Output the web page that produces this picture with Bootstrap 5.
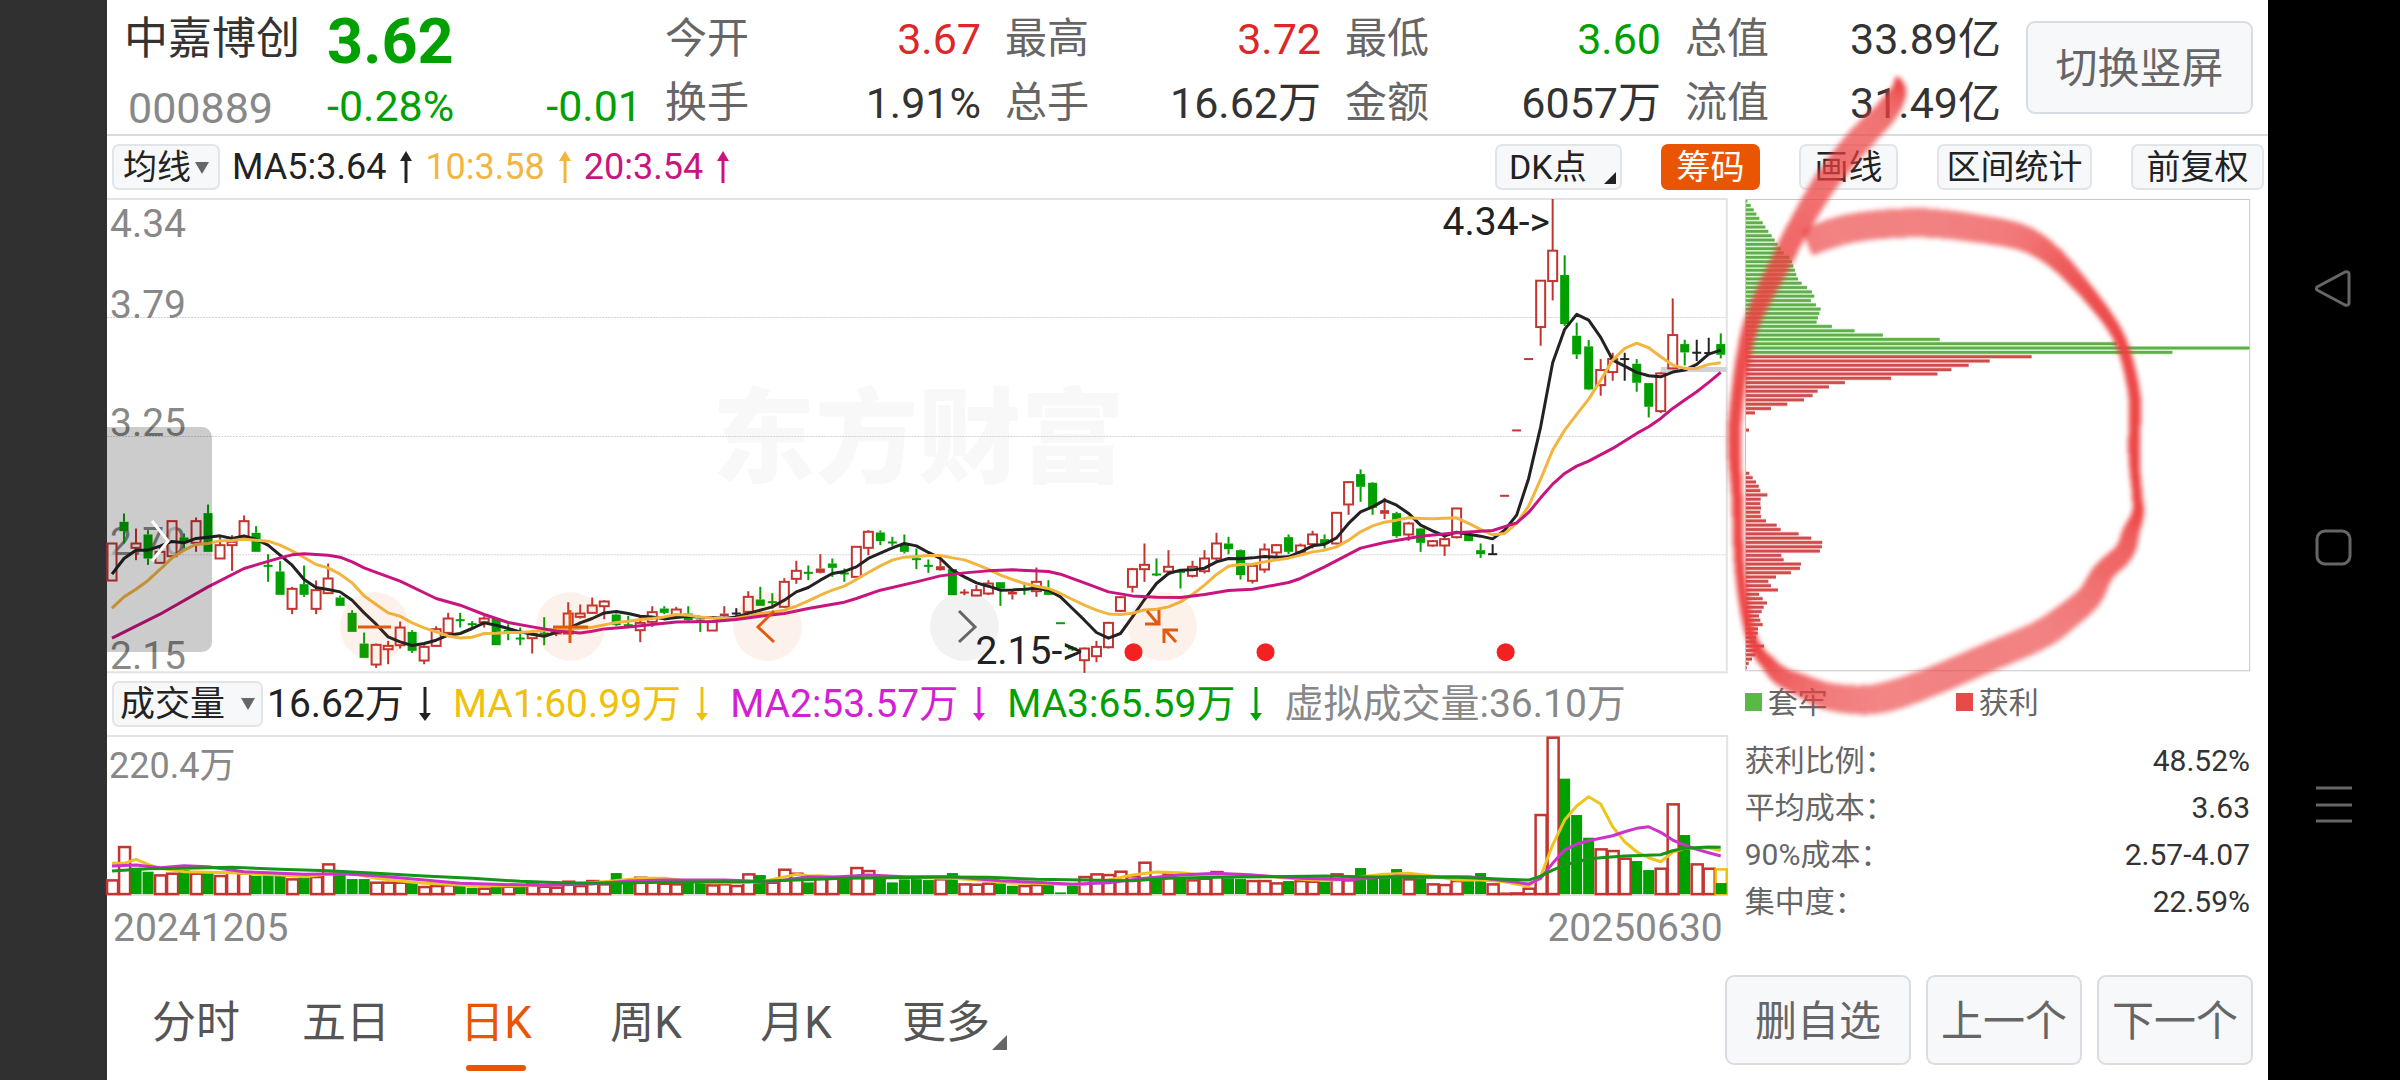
<!DOCTYPE html>
<html lang="zh-CN">
<head>
<meta charset="utf-8">
<meta name="viewport" content="width=device-width, initial-scale=1">
<title>中嘉博创 000889</title>
<link href="https://cdn.jsdelivr.net/npm/bootstrap@5.3.0/dist/css/bootstrap.min.css" rel="stylesheet">
<script src="https://cdn.jsdelivr.net/npm/bootstrap@5.3.0/dist/js/bootstrap.bundle.min.js"></script>
<style>
:root { --up:#dc2828; --down:#00a000; --brand:#ea5504; --ink:#333; --soft:#666; --pale:#888; --rule:#e3e3e3; --tile:#f7f8fa; }
body { font-family: Roboto, "Noto Sans CJK SC", sans-serif; color: var(--ink); background:#fff; overflow-x:hidden; }
.edge { flex: 0 0 107px; background:#303030; }
.sysnav { flex: 0 0 132px; background:#000; padding-top:14px; gap:198px; }
.sysnav button { width:60px; height:60px; background:none; border:0; padding:0; }
.quote-head { height:136px; border-bottom:2px solid #dcdcdc; padding: 7px 15px 5px 17px; }
.line64 { height:64px; line-height:64px; }
.stock-id { width:203px; }
.stock-name { font-size:44px; line-height:64px; margin:0; font-weight:400; }
.stock-code { font-size:43px; color:var(--pale); padding:5px 0 0 4px; }
.price-box { width:338px; padding-right:23px; }
.price-now { font-size:63px; font-weight:700; line-height:70px; height:64px; color:var(--down); }
.price-chg { font-size:43px; color:var(--down); padding-top:3px; }
.quotes { display:grid; grid-template-columns:repeat(4,minmax(0,1fr)); column-gap:24px; font-size:43px; margin:0 25px 0 0; }
.quotes dt { font-weight:400; color:var(--soft); font-size:42px; }
.quotes dd { margin:0; }
.c-up { color:var(--up); } .c-down { color:var(--down); }
.tile { background:var(--tile); border:2px solid #d9dde1; border-radius:9px; color:var(--soft); font-size:42px; line-height:1; padding:3px 0 0; font-weight:400; white-space:nowrap; }
.tile-sm { height:46px; border-radius:7px; font-size:34px; color:#222; border-color:#e2e5e8; position:relative; padding:0; }
.tile-on { background:var(--brand); border-color:var(--brand); color:#fff; }
.tools { height:62px; padding:0 4px 0 5px; }
.ma-line { font-size:36px; padding-left:12px; white-space:nowrap; }
.ma-line svg { width:39px; height:32px; }
.vol-line { font-size:39px; white-space:nowrap; }
.vol-line > svg { width:49px; height:34px; }
.board { display:grid; grid-template-columns:minmax(0,3fr) minmax(0,1fr); }
.board svg.plot { display:block; width:100%; height:auto; overflow:visible; }
.board text { font-family: Roboto, "Noto Sans CJK SC", sans-serif; }
.dates { height:64px; padding:0 5px 0 6px; font-size:39px; color:var(--pale); }
.round-btn { position:absolute; top:83%; width:69px; height:69px; border-radius:50%; border:0; padding:0; background:rgba(234,85,4,.08); }
.round-btn svg, .drawer svg { display:block; width:100%; height:100%; }
.drawer { position:absolute; left:0; top:229px; width:105px; height:225px; border:0; padding:0; border-radius:0 10px 10px 0; background:rgba(0,0,0,.2); }
.side { padding:0 18px 0 17px; }
.key { width:17px; height:18px; }
.legend-row { height:60px; font-size:30px; color:var(--soft); }
.legend-row > div { width:211px; gap:6px; }
.facts { font-size:30px; width:100%; margin-top:5px; }
.facts th { font-weight:400; color:var(--soft); }
.facts td { text-align:right; }
.facts th, .facts td { height:47px; line-height:47px; padding:0; }
.scribble { position:absolute; left:0; top:0; overflow:visible; pointer-events:none; }
.bottom { height:120px; padding:15px 15px 0 14px; }
.period { width:150px; height:105px; line-height:96px; font-size:44px; text-align:center; color:#555; text-decoration:none; position:relative; }
.period.on { color:var(--brand); }
.period.on::after { content:""; position:absolute; left:45px; top:90px; width:60px; height:6px; border-radius:3px; background:var(--brand); }
.period svg { position:absolute; right:14px; top:60px; }
.bottom .tile { height:90px; }
</style>
</head>
<body>
<div class="d-flex min-vh-100">
  <div class="edge"></div>
  <main class="flex-grow-1 position-relative" style="min-width:0">
    <header class="quote-head d-flex">
      <div class="stock-id flex-shrink-0">
        <h1 class="stock-name">中嘉博创</h1>
        <div class="stock-code line64">000889</div>
      </div>
      <div class="price-box flex-shrink-0">
        <div class="price-now">3.62</div>
        <div class="price-chg line64 d-flex justify-content-between"><span>-0.28%</span><span>-0.01</span></div>
      </div>
      <dl class="quotes flex-grow-1">
        <div class="line64 d-flex justify-content-between"><dt>今开</dt><dd class="c-up">3.67</dd></div>
        <div class="line64 d-flex justify-content-between"><dt>最高</dt><dd class="c-up">3.72</dd></div>
        <div class="line64 d-flex justify-content-between"><dt>最低</dt><dd class="c-down">3.60</dd></div>
        <div class="line64 d-flex justify-content-between"><dt>总值</dt><dd>33.89亿</dd></div>
        <div class="line64 d-flex justify-content-between"><dt>换手</dt><dd>1.91%</dd></div>
        <div class="line64 d-flex justify-content-between"><dt>总手</dt><dd>16.62万</dd></div>
        <div class="line64 d-flex justify-content-between"><dt>金额</dt><dd>6057万</dd></div>
        <div class="line64 d-flex justify-content-between"><dt>流值</dt><dd>31.49亿</dd></div>
      </dl>
      <button type="button" class="tile flex-shrink-0" style="width:227px;height:93px;margin-top:14px">切换竖屏</button>
    </header>

    <div class="tools d-flex align-items-center justify-content-between">
      <div class="d-flex align-items-center">
        <button type="button" class="tile tile-sm" style="width:108px">均线<svg width="14" height="14" viewBox="0 0 14 14" class="ms-1 mb-1"><path d="M0 1h14L7 13z" fill="#666"/></svg></button>
        <div class="ma-line d-flex align-items-center">
          <span style="color:#222">MA5:3.64</span><svg viewBox="0 0 39 32"><path d="M20 32V8" stroke="#222" stroke-width="3"/><path d="M20 0l6 10H14z" fill="#222"/></svg>
          <span style="color:#f2b640">10:3.58</span><svg viewBox="0 0 39 32"><path d="M20 32V8" stroke="#f2b640" stroke-width="3"/><path d="M20 0l6 10H14z" fill="#f2b640"/></svg>
          <span style="color:#c8147f">20:3.54</span><svg viewBox="0 0 39 32"><path d="M20 32V8" stroke="#c8147f" stroke-width="3"/><path d="M20 0l6 10H14z" fill="#c8147f"/></svg>
        </div>
      </div>
      <div class="d-flex" style="gap:39px">
        <button type="button" class="tile tile-sm text-start" style="width:127px;padding-left:12px">DK点<svg class="position-absolute bottom-0 end-0 me-1 mb-1" width="12" height="12"><path d="M12 0v12H0z" fill="#222"/></svg></button>
        <button type="button" class="tile tile-sm tile-on" style="width:99px">筹码</button>
        <button type="button" class="tile tile-sm" style="width:99px">画线</button>
        <button type="button" class="tile tile-sm" style="width:155px">区间统计</button>
        <button type="button" class="tile tile-sm" style="width:133px">前复权</button>
      </div>
    </div>

    <div class="board">
      <section>
        <div class="position-relative">
          <svg class="plot" id="kline" viewBox="0 0 1620 475"></svg>
          <button type="button" class="drawer" aria-label="展开"><svg viewBox="0 0 105 225"><path d="M45 94l16 20-16 20" fill="none" stroke="#fff" stroke-width="3"/></svg></button>
          <button type="button" class="round-btn" style="left:14.4%" aria-label="缩小"><svg viewBox="0 0 69 69"><path d="M18 35h33" stroke="#e05a10" stroke-width="3"/></svg></button>
          <button type="button" class="round-btn" style="left:26.5%" aria-label="放大"><svg viewBox="0 0 69 69"><path d="M17 35h35M34 18v33" stroke="#e05a10" stroke-width="3"/></svg></button>
          <button type="button" class="round-btn" style="left:38.6%" aria-label="向左"><svg viewBox="0 0 69 69"><path d="M41 19L25 35l16 15" fill="none" stroke="#e05a10" stroke-width="3"/></svg></button>
          <button type="button" class="round-btn" style="left:50.8%;background:rgba(0,0,0,.05)" aria-label="向右"><svg viewBox="0 0 69 69"><path d="M29 19l16 16-16 15" fill="none" stroke="#666" stroke-width="3"/></svg></button>
          <button type="button" class="round-btn" style="left:63%" aria-label="收起"><svg viewBox="0 0 69 69"><path d="M19 19l11 13M31 18v14H17M36 51V38h14M37 38l11 12" fill="none" stroke="#e05a10" stroke-width="3"/></svg></button>
        </div>
        <div class="tools d-flex align-items-center vol-line">
          <button type="button" class="tile tile-sm flex-shrink-0 me-1" style="width:151px;font-size:35px">成交量<svg width="14" height="12" viewBox="0 0 14 12" class="ms-3 mb-1"><path d="M0 0h14L7 12z" fill="#666"/></svg></button>
          <span style="color:#222">16.62万</span><svg viewBox="0 0 49 34"><path d="M21 0v26" stroke="#222" stroke-width="3"/><path d="M21 34l6-8H15z" fill="#222"/></svg>
          <span style="color:#f0c010">MA1:60.99万</span><svg viewBox="0 0 49 34"><path d="M21 0v26" stroke="#f0c010" stroke-width="3"/><path d="M21 34l6-8H15z" fill="#f0c010"/></svg>
          <span style="color:#d41fd4">MA2:53.57万</span><svg viewBox="0 0 49 34"><path d="M21 0v26" stroke="#d41fd4" stroke-width="3"/><path d="M21 34l6-8H15z" fill="#d41fd4"/></svg>
          <span style="color:#00a000">MA3:65.59万</span><svg viewBox="0 0 49 34"><path d="M21 0v26" stroke="#00a000" stroke-width="3"/><path d="M21 34l6-8H15z" fill="#00a000"/></svg>
          <span style="color:#888">虚拟成交量:36.10万</span>
        </div>
        <svg class="plot" id="volume" viewBox="0 0 1620 161"></svg>
        <div class="dates d-flex align-items-center justify-content-between"><span>20241205</span><span>20250630</span></div>
      </section>

      <aside class="side position-relative">
        <svg class="plot" id="chips" viewBox="0 0 506 475"></svg>
        <div class="legend-row d-flex align-items-center">
          <div class="d-flex align-items-center"><span class="key" style="background:#5ab946"></span>套牢</div>
          <div class="d-flex align-items-center"><span class="key" style="background:#e84a4a"></span>获利</div>
        </div>
        <table class="facts">
          <tbody>
            <tr><th scope="row">获利比例：</th><td>48.52%</td></tr>
            <tr><th scope="row">平均成本：</th><td>3.63</td></tr>
            <tr><th scope="row">90%成本：</th><td>2.57-4.07</td></tr>
            <tr><th scope="row">集中度：</th><td>22.59%</td></tr>
          </tbody>
        </table>
        <svg class="scribble" id="scribble" width="540" height="500"></svg>
      </aside>
    </div>

    <footer class="bottom d-flex justify-content-between">
      <nav class="d-flex">
        <a class="period" href="#">分时</a>
        <a class="period" href="#">五日</a>
        <a class="period on" href="#" aria-current="page">日K</a>
        <a class="period" href="#">周K</a>
        <a class="period" href="#">月K</a>
        <a class="period" href="#">更多<svg width="15" height="15"><path d="M15 0v15H0z" fill="#666"/></svg></a>
      </nav>
      <div class="d-flex" style="gap:15px">
        <button type="button" class="tile" style="width:186px">删自选</button>
        <button type="button" class="tile" style="width:156px">上一个</button>
        <button type="button" class="tile" style="width:156px">下一个</button>
      </div>
    </footer>
  </main>
  <nav class="sysnav d-flex flex-column align-items-center justify-content-center">
    <button type="button" aria-label="返回"><svg width="60" height="60" fill="none" stroke="#666" stroke-width="3" stroke-linejoin="round"><path d="M13 28Q12 30 13 31L41 46Q45 47 45 44V15Q45 12 41 13Z"/></svg></button>
    <button type="button" aria-label="主页"><svg width="60" height="60" fill="none" stroke="#666" stroke-width="3"><rect x="13" y="14" width="33" height="33" rx="8"/></svg></button>
    <button type="button" aria-label="最近任务"><svg width="60" height="60" stroke="#666" stroke-width="3"><path d="M12 13h36M12 30h36M12 46h36"/></svg></button>
  </nav>
</div>

<script>
const STEP = 12, X0 = 5;
const cx = i => X0 + STEP * i;

/* Candles: colour, body top, body bottom, high, low, in thirds of a pixel from the level v = 0. */
const candles = `r 430 541 430 541|g 365 393 340 430|r 430 443 385 480|g 403 475 390 494|r 455 488 440 490|r 363 468 363 468|g 412 428 400 445|r 363 428 352 455|g 339 455 313 455|r 435 475 410 475|r 425 435 405 512|r 363 410 346 415|g 398 455 378 455|g 497 497 462 545|g 514 584 483 584|r 566 626 560 642|g 552 584 496 590|r 570 626 541 642|r 535 579 490 579|g 592 617 586 617|g 638 695 630 695|g 730 773 697 773|r 734 793 730 803|r 737 747 722 792|r 682 735 664 745|g 695 752 690 758|r 740 781 735 792|r 687 737 678 740|r 655 698 638 700|g 660 660 638 682|g 672 672 663 682|r 655 666 648 682|g 655 735 655 735|g 692 692 672 720|g 715 715 682 735|r 702 714 690 760|g 700 700 651 735|r 690 700 680 708|r 640 700 606 700|r 640 650 613 655|r 616 638 592 640|r 604 618 600 657|g 643 675 640 678|g 675 675 647 680|r 668 690 650 726|r 636 665 618 680|g 625 638 618 642|r 628 650 620 655|g 640 660 618 665|g 658 667 655 695|r 664 691 664 691|R 640 648 618 650|k 640 640 624 650|r 590 635 573 640|g 598 617 560 617|g 606 606 579 625|r 545 620 534 622|r 512 536 482 551|g 518 518 496 540|R 505 518 462 520|g 490 503 475 530|g 520 520 505 545|r 440 530 440 530|r 395 443 390 465|g 397 423 391 435|g 427 427 410 437|g 432 455 403 460|g 477 477 445 507|g 497 497 478 518|R 498 510 475 512|g 507 585 507 585|R 577 577 567 585|r 570 586 555 588|r 550 580 540 585|g 546 565 546 617|R 575 583 570 598|g 568 568 552 584|r 545 573 502 590|g 566 584 540 585|g 669 669 669 669|g 745 745 738 752|r 745 780 742 818|r 740 768 722 786|r 668 741 665 745|r 591 632 588 635|r 507 560 503 577|r 494 507 430 545|g 523 523 475 528|r 500 514 450 525|g 515 515 515 565|r 500 527 482 532|r 475 513 450 520|r 430 475 398 482|g 430 447 410 462|g 450 525 448 538|r 497 542 490 550|r 448 508 430 518|r 435 457 432 470|g 411 455 403 462|r 436 455 430 460|r 403 432 392 445|g 417 430 403 445|r 338 430 336 432|r 246 313 243 344|g 222 260 208 305|g 248 323 246 344|R 330 341 293 357|g 339 408 335 413|r 370 403 365 422|g 385 428 383 455|r 423 436 420 440|r 417 436 410 467|r 325 411 323 415|g 402 423 402 423|g 450 462 430 473|k 462 462 432 462|R 287 287 287 287|R 91 91 91 91|R -123 -123 -123 -123|r -358 -219 -360 -163|r -448 -357 -603 -299|g -375 -228 -434 -222|g -193 -137 -232 -123|g -161 -32 -180 -30|r -90 -45 -123 -13|r -123 -84 -142 -58|k -123 -123 -142 -58|g -109 -52 -123 -25|g -51 20 -51 52|r -80 33 -84 39|r -195 -95 -305 -93|g -168 -143 -181 -104|k -142 -142 -181 -117|k -141 -141 -187 -138|g -168 -136 -200 -125`
  .split('|').map(s => { const [c, ...n] = s.split(' '); return [c, ...n.map(Number)]; });
const ky = v => v / 3 + 202;
const ink = { r: '#c23531', R: '#c23531', g: '#00a000', k: '#222' };

/* A list of values, or index:value pairs where steps are skipped. */
const pts = s => s.trim().split(/[ ,]+/).map((t, i) => t.includes(':') ? t.split(':').map(Number) : [i, +t]);
const poly = (s, y, color) => `<polyline fill="none" stroke="${color}" stroke-width="3" stroke-linejoin="round" points="${pts(s).map(([i, v]) => cx(i) + ',' + y(v).toFixed(1)).join(' ')}"/>`;

const ma5 = '522 475 450 450 438 424 428 415 411 407 415 407 418 435 465 495 538 562 568 575 600 638 672 710 725 736 730 720 705 700 685 668 675 685 695 702 708 697 685 668 655 638 634 640 648 650 656 652 648 651 652 655 650 640 630 620 600 575 562 540 520 514 500 475 459 443 430 437 457 475 510 530 548 558 570 569 567 564 570 590 625 660 697 714 700 650 598 550 520 510 509 504 485 475 476 473 469 471 470 455 437 432 413 370 335 320 300 315 340 375 392 407 396 402 408 416 390 345 235 80 -112 -212 -257 -240 -188 -120 -102 -83 -73 -70 -84 -90 -107 -138 -150';
const ma10 = '624 590 567 541 508 473 450 433 430 422 421 417 420 423 435 452 472 493 503 522 548 587 613 638 648 668 683 695 707 713 711 700 699 697 697 694 690 688 688 684 681 674 667 663 658 655 650 643 645 650 653 655 654 648 640 636 630 618 602 585 570 558 538 517 497 480 471 469 466 466 473 479 493 508 525 538 550 558 565 580 598 615 630 641 643 639 629 627 620 605 583 555 523 498 493 492 485 479 474 465 455 450 440 420 395 377 366 360 353 355 356 354 353 370 388 404 400 370 318 237 150 90 43 -3 -60 -120 -155 -171 -157 -130 -105 -95 -95 -107 -112';
const ma20 = '0:714 4:642 8:560 11:505 14:473 15:464 16:461 17:463 18:465 19:471 20:485 21:503 22:517 24:543 27:595 29:615 31:643 33:667 35:680 37:692 39:698 40:693 41:686 43:680 45:673 47:665 50:664 52:658 54:648 56:640 58:625 61:606 62:595 64:570 67:545 69:527 71:518 73:512 75:509 78:514 79:522 81:548 83:575 85:587 87:591 89:592 91:583 93:571 95:567 98:547 99:535 101:500 104:444 106:427 109:408 112:398 115:391 117:368 118:337 119:293 120:252 121:220 122:198 123:183 125:145 127:100 128:80 129:55 130:25 131:0 132:-25 133:-53 134:-83';

let out = '<text x="605" y="277" font-size="103" font-weight="900" fill="#f8f8f8">东方财富</text>';
out += '<path d="M0 1H1619V474H0" fill="none" stroke="#e3e3e3" stroke-width="2"/>';
for (const y of [119, 238, 356]) out += `<path d="M0 ${y}.5H1618" stroke="#d4d4d4" stroke-dasharray="2 1"/>`;
[['4.34', 39], ['3.79', 120], ['3.25', 238], ['2.70', 357], ['2.15', 471]].forEach(([t, y]) => out += `<text x="3" y="${y}" font-size="39" fill="#888">${t}</text>`);
out += '<path d="M1553 171.500h66" stroke="#d0d4d9" stroke-width="5"/>';
candles.forEach(([c, t, b, h, l], i) => {
  const x = cx(i), col = ink[c];
  if (h < t) out += `<path d="M${x} ${ky(h)}V${ky(t)}" stroke="${col}" stroke-width="2"/>`;
  if (l > b) out += `<path d="M${x} ${ky(b)}V${ky(l)}" stroke="${col}" stroke-width="2"/>`;
  if (b - t < 4) out += `<path d="M${x - 4.5} ${ky(t)}h9" stroke="${col}" stroke-width="2"/>`;
  else if (c === 'r') out += `<rect x="${x - 4.5}" y="${ky(t)}" width="9" height="${(b - t) / 3}" fill="#fff" fill-opacity=".6" stroke="${col}" stroke-width="2"/>`;
  else out += `<rect x="${x - 4.5}" y="${ky(t)}" width="9" height="${(b - t) / 3}" fill="${col}"/>`;
});
out += poly(ma5, ky, '#222') + poly(ma10, ky, '#f2b640') + poly(ma20, ky, '#c8147f');
out += '<text x="1335" y="37" font-size="39" fill="#222">4.34-&gt;</text><text x="868" y="466" font-size="39" fill="#222">2.15-&gt;</text>';
for (const x of [1026, 1158, 1398]) out += `<circle cx="${x}" cy="454" r="9" fill="#f32222"/>`;
document.getElementById('kline').innerHTML = out;

/* Volume */
const vols = 'r478 r378 g443 g455 r463 r458 g450 r458 g455 r465 r455 r458 g467 g460 g462 r475 g473 r468 r430 g465 g477 g477 r485 r485 r485 g487 r498 r495 r493 g497 g503 r503 g500 r497 g500 r490 r497 r500 r482 r495 r480 r490 g459 g488 r470 r473 r488 r490 g487 g489 r493 r490 r495 r460 g465 r485 r446 r458 g487 r470 r470 g475 r441 r450 g475 g487 g478 g475 g480 r475 g459 r490 r491 r488 g490 g497 r495 r492 g492 g517 g497 r468 r460 r462 r452 r466 r425 g470 r460 g475 r478 r473 r453 g475 g477 r480 r480 r487 g483 r480 r482 g485 r460 r478 g444 g475 g475 g447 r475 g475 r490 r492 r480 g483 g459 r490 r518 r517 r503 r282 r50 g176 g285 g353 r385 r390 r413 g423 g450 r443 r250 g345 r430 r443 y445'.split(' ');
const vy = v => v / 3 - 15;
let vo = '<path d="M0 1H1619.500V160H0" fill="none" stroke="#e3e3e3" stroke-width="2"/><text x="2" y="43" font-size="36" fill="#888">220.4万</text>';
vols.forEach((s, i) => {
  const c = s[0], y = vy(+s.slice(1)), x = cx(i);
  if (c === 'g') vo += `<rect x="${x - 5.5}" y="${y}" width="11" height="${159 - y}" fill="#00a000"/>`;
  else vo += `<rect x="${x - 5}" y="${y + 1}" width="11" height="${158 - y}" fill="#fff" stroke="${c === 'y' ? '#f0c010' : '#c23531'}" stroke-width="2.500"/>`;
});
vo += '<rect x="1608" y="148" width="11" height="11" fill="#00a000"/>';
vo += poly('0:430 1:430 2:418 3:433 4:445 5:450 6:455 8:457 10:458 12:462 14:465 16:470 18:462 20:460 22:475 24:483 26:490 28:493 30:497 34:497 38:493 41:485 44:475 46:475 48:483 50:488 52:488 54:485 55:478 57:463 58:468 59:467 61:472 64:468 67:473 70:475 73:482 75:490 77:490 79:493 81:493 83:480 85:465 87:456 89:458 91:466 94:463 96:468 98:475 100:480 102:480 104:470 106:463 108:460 110:468 112:480 114:480 116:485 117:493 118:498 119:470 120:375 121:300 122:258 123:230 124:252 125:320 126:365 127:395 128:413 129:425 130:397 131:385 132:385 133:383 134:392', vy, '#eec420');
vo += poly('0:438 2:435 4:443 6:437 8:440 11:455 13:458 16:463 19:461 22:467 26:480 29:490 32:493 36:496 40:492 43:483 46:480 51:480 55:485 58:470 60:472 63:465 66:470 70:470 74:482 77:487 80:493 83:488 86:475 89:465 92:460 95:465 99:475 103:479 107:468 110:470 113:470 115:478 117:487 118:492 119:475 120:430 121:390 122:372 123:362 124:355 125:347 126:335 127:325 128:320 129:337 130:360 131:375 132:388 133:398 134:408', vy, '#cc33cc');
vo += poly('0:453 3:446 6:445 10:442 14:448 18:452 22:460 26:468 30:475 34:484 38:489 42:489 46:487 50:485 53:485 57:480 61:475 65:473 69:471 73:472 77:478 81:480 85:482 88:475 92:472 96:470 101:468 106:472 112:472 116:478 118:480 119:468 120:450 121:435 122:425 123:417 124:413 126:408 129:404 130:392 131:385 133:381 134:382', vy, '#169616');
document.getElementById('volume').innerHTML = vo;

/* Cost distribution */
const trapped = [4,14,23,31,40,50,58,67,77,86,95,105,113,130,138,142,147,151,156,167,183,198,205,195,210,224,220,216,212,258,326,411,582,1115,1513,1281];
const profit = [858,732,669,617,575,436,297,249,215,200,174,124,75,27,0,0,0,9,0,0,0,0,0,0,0,0,0,10,20,30,38,43,64,44,43,45,43,45,60,92,104,158,196,229,228,222,106,113,165,162,135,90,67,75,96,39,50,63,53,47,39,43,50,36,35,30,29,54,32,29,18,8,2];
let co = '<rect x=".5" y="1.500" width="505" height="472" fill="none" stroke="#c8c8c8"/>';
[...trapped, ...profit].forEach((w, i) => {
  if (!w) return;
  const y = 1.8 + i * 4.327, green = i < trapped.length;
  co += `<rect x="1" y="${y - .8}" width="${w / 3}" height="4.300" fill="${green ? '#c9efc0' : '#f7c4c4'}"/>`;
  co += `<rect x="1" y="${y}" width="${w / 3}" height="2.700" fill="${green ? '#5fae4b' : '#cf4c4c'}"/>`;
});
document.getElementById('chips').innerHTML = co;

/* Brush stroke: x, y, width */
const stroke = [[1897,77,3],[1898,92,16],[1885,113,23],[1861,138,25],[1841,162,24],[1823,186,23],[1797,230,21],[1783,258,20],[1766,291,18],[1751,325,15],[1743,359,13],[1738,393,12],[1734,440,12],[1737,494,10],[1739,555,9],[1743,596,9],[1749,629,9],[1758,651,11],[1768,663,14],[1781,676,18],[1805,687,22],[1827,696,26],[1860,700,28],[1890,696,29],[1933,681,28],[1987,658,28],[2040,635,28],[2070,614,26],[2090,596,24],[2103,573,21],[2124,552,19],[2131,532,16],[2138,513,11],[2137,494,9],[2134,454,10],[2135,410,11],[2133,386,11],[2124,350,11],[2110,322,12],[2080,284,15],[2050,254,20],[2020,237,25],[1973,228,27],[1927,223,28],[1887,224,28],[1853,228,28],[1830,234,28],[1807,243,26]]
  .map(([x, y, w]) => [x - 1728, y - 198, w]);
const cr = (a, b, c, d, t) => .5 * (2 * b + (c - a) * t + (2 * a - 5 * b + 4 * c - d) * t * t + (3 * b - a - 3 * c + d) * t * t * t);
const fine = [];
for (let i = 0; i < stroke.length - 1; i++) {
  const p = [stroke[Math.max(i - 1, 0)], stroke[i], stroke[i + 1], stroke[Math.min(i + 2, stroke.length - 1)]];
  for (let k = 0; k < 8; k++) fine.push([0, 1, 2].map(n => cr(p[0][n], p[1][n], p[2][n], p[3][n], k / 8)));
}
fine.push(stroke[stroke.length - 1]);
const rim = fine.map(([x, y, w], i) => {
  const a = fine[Math.max(i - 1, 0)], b = fine[Math.min(i + 1, fine.length - 1)];
  const dx = b[0] - a[0], dy = b[1] - a[1], m = Math.hypot(dx, dy) || 1, h = w / 2 + .5;
  return [[x - dy / m * h, y + dx / m * h], [x + dy / m * h, y - dx / m * h]];
});
let bo = '<defs><filter id="soft" x="-10%" y="-10%" width="120%" height="120%" color-interpolation-filters="sRGB"><feGaussianBlur stdDeviation="2.500"/></filter></defs><g filter="url(#soft)" shape-rendering="crispEdges">';
for (let i = 0; i < rim.length - 1; i++) {
  const q = [rim[i][0], rim[i + 1][0], rim[i + 1][1], rim[i][1]].map(p => p.map(v => v.toFixed(1)).join(',')).join(' ');
  const alpha = Math.min(.97, 1.16 - fine[i][2] * .018).toFixed(2);
  bo += `<polygon points="${q}" fill="#ec4040" fill-opacity="${alpha}"/>`;
}
document.getElementById('scribble').innerHTML = bo + '</g>';
</script>
</body>
</html>
